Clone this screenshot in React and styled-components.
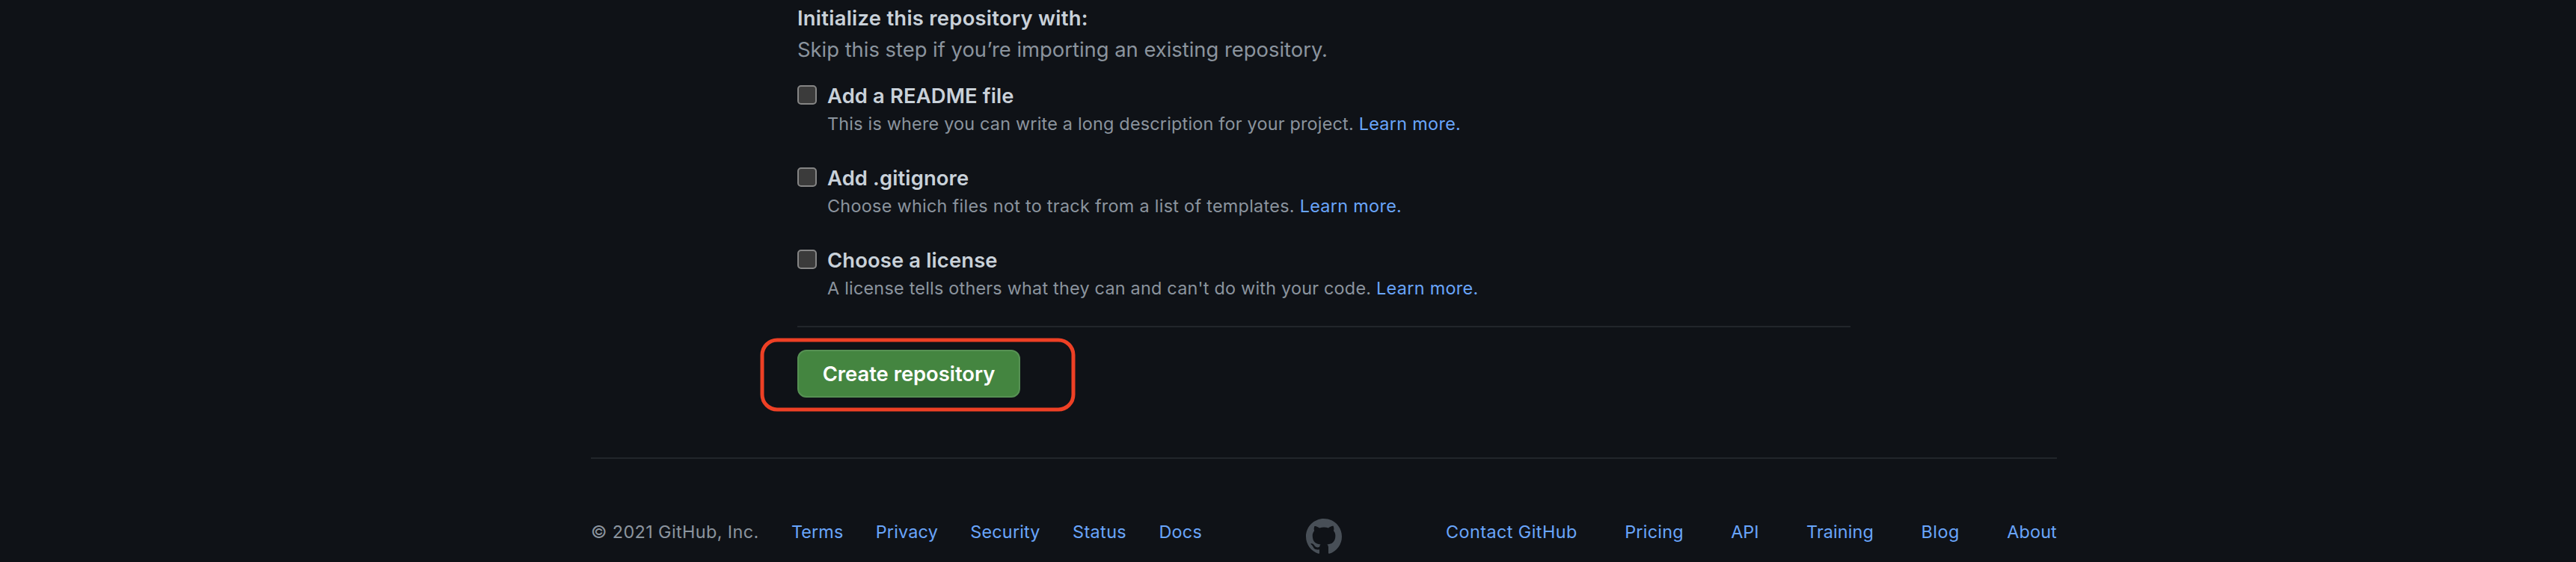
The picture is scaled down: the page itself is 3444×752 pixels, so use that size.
import React from "react";
import styled, { createGlobalStyle } from "styled-components";

const GlobalStyle = createGlobalStyle`
  * { box-sizing: border-box; }
  body {
    margin: 0;
    background: #0f1217;
    color: #c9d1d9;
    font-family: Inter, "Liberation Sans", sans-serif;
    overflow: hidden;
  }
`;

const Page = styled.div`
  width: 1960px;
  height: 752px;
  margin-left: 790px;
  padding-top: 3px;
  overflow: hidden;
`;

const Form = styled.main`
  width: 1408px;
  margin-left: 276px;
`;

const Heading = styled.h2`
  margin: 0;
  font-size: 27.4px;
  font-weight: 600;
  line-height: 42px;
  letter-spacing: 0.26px;
`;

const Hint = styled.p`
  margin: 0 0 21px;
  color: #8b949e;
  font-size: 27.4px;
  line-height: 42px;
  letter-spacing: -0.01px;
`;

const Options = styled.div`
  display: flex;
  flex-direction: column;
  gap: 35px;
`;

const Option = styled.label`
  display: flex;
  gap: 14px;
  height: 75px;
`;

const Checkbox = styled.input.attrs({ type: "checkbox" })`
  appearance: none;
  flex: none;
  width: 26px;
  height: 26px;
  margin: 6px 0 0;
  background: #3b3b3b;
  border: 2px solid #858585;
  border-radius: 5px;
`;

const OptionTitle = styled.div`
  font-size: 27.4px;
  font-weight: 600;
  line-height: 40px;
  letter-spacing: 0.13px;
`;

const Note = styled.div`
  color: #8b949e;
  font-size: 23.4px;
  line-height: 35px;
  white-space: nowrap;
  letter-spacing: ${(p) => p.$spacing}px;
`;

const Link = styled.a`
  color: #69a5fb;
  text-decoration: none;
  white-space: nowrap;
  letter-spacing: ${(p) => p.$spacing}px;
`;

const Rule = styled.hr`
  height: 2px;
  margin: 33px 0 30px;
  border: 0;
  background: #22262b;
`;

const Submit = styled.div`
  position: relative;
  width: 298px;
`;

const Button = styled.button`
  display: block;
  width: 298px;
  height: 64px;
  padding: 0;
  border: 2px solid #569153;
  border-radius: 12px;
  background: #448540;
  color: #fff;
  font: 600 27.4px/60px Inter, "Liberation Sans", sans-serif;
  letter-spacing: -0.03px;
`;

const Highlight = styled.svg`
  position: absolute;
  left: -50px;
  top: -16px;
  pointer-events: none;
`;

const Footer = styled.footer`
  display: flex;
  justify-content: space-between;
  align-items: flex-start;
  margin-top: 80px;
  padding-top: 80px;
  border-top: 2px solid #22262b;
  color: #8b949e;
  font-size: 23.4px;
  line-height: 35px;
`;

const FooterList = styled.div`
  display: flex;
  justify-content: space-between;
  width: 817px;
`;

const Copyright = styled.span`
  letter-spacing: 0.393px;
  white-space: nowrap;
`;

const Mark = styled.svg`
  display: block;
  fill: #484f57;
`;

const options = [
  { title: "Add a README file", note: "This is where you can write a long description for your project.", spacing: 0.2 },
  { title: "Add .gitignore", note: "Choose which files not to track from a list of templates.", spacing: 0.28 },
  { title: "Choose a license", note: "A license tells others what they can and can't do with your code.", spacing: 0.22 },
];

const leftLinks = [["Terms", 0.108], ["Privacy", 0.192], ["Security", 0.174], ["Status", 0.4], ["Docs", 0.244]];
const rightLinks = [["Contact GitHub", 0.43], ["Pricing", 0.23], ["API", 0], ["Training", 0.117], ["Blog", 0.5], ["About", 0.15]];

const FooterLinks = ({ items }) =>
  items.map(([name, spacing]) => (
    <Link key={name} $spacing={spacing}>{name}</Link>
  ));

export default function App() {
  return (
    <>
      <GlobalStyle />
      <Page>
        <Form>
          <Heading>Initialize this repository with:</Heading>
          <Hint>Skip this step if you’re importing an existing repository.</Hint>
          <Options>
            {options.map((o) => (
              <Option key={o.title}>
                <Checkbox />
                <div>
                  <OptionTitle>{o.title}</OptionTitle>
                  <Note $spacing={o.spacing}>
                    {o.note} <Link $spacing={0.31}>Learn more.</Link>
                  </Note>
                </div>
              </Option>
            ))}
          </Options>
          <Rule />
          <Submit>
            <Button>Create repository</Button>
            <Highlight width="422" height="99" viewBox="0 0 422 99" fill="none">
              <rect x="3" y="3" width="416" height="93" rx="20" stroke="#ee4025" strokeWidth="5" />
            </Highlight>
          </Submit>
        </Form>
        <Footer>
          <FooterList>
            <Copyright>© 2021 GitHub, Inc.</Copyright>
            <FooterLinks items={leftLinks} />
          </FooterList>
          <Mark width="48" height="48" viewBox="0 0 16 16">
            <path
              fillRule="evenodd"
              d="M8 0C3.58 0 0 3.58 0 8c0 3.54 2.29 6.53 5.47 7.59.4.07.55-.17.55-.38 0-.19-.01-.82-.01-1.49-2.01.37-2.53-.49-2.69-.94-.09-.23-.48-.94-.82-1.13-.28-.15-.68-.52-.01-.53.63-.01 1.08.58 1.23.82.72 1.21 1.87.87 2.33.66.07-.52.28-.87.51-1.07-1.78-.2-3.64-.89-3.64-3.95 0-.87.31-1.59.82-2.15-.08-.2-.36-1.02.08-2.12 0 0 .67-.21 2.2.82.64-.18 1.32-.27 2-.27.68 0 1.36.09 2 .27 1.53-1.04 2.2-.82 2.2-.82.44 1.1.16 1.92.08 2.12.51.56.82 1.27.82 2.15 0 3.07-1.87 3.75-3.65 3.95.29.25.54.73.54 1.48 0 1.07-.01 1.93-.01 2.2 0 .21.15.46.55.38A8.013 8.013 0 0016 8c0-4.42-3.58-8-8-8z"
            />
          </Mark>
          <FooterList>
            <FooterLinks items={rightLinks} />
          </FooterList>
        </Footer>
      </Page>
    </>
  );
}
